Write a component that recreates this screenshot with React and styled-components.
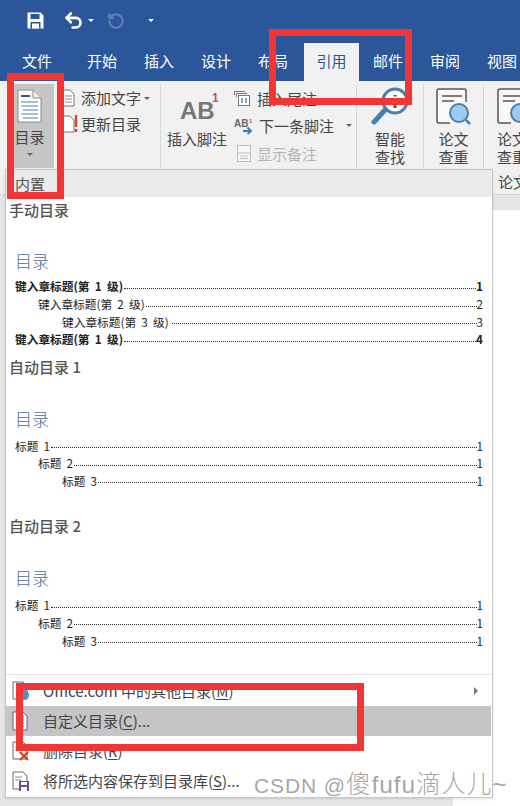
import React from "react";
import styled, { createGlobalStyle } from "styled-components";
import { Undo2, RotateCcw } from "lucide-react";

const FONT = `"Noto Sans CJK SC", "Liberation Sans", sans-serif`;

const Global = createGlobalStyle`
  html, body { margin: 0; padding: 0; background: #fff; }
  body { font-family: ${FONT}; overflow: hidden; }
`;

const Page = styled.div`
  position: relative;
  width: 520px;
  height: 806px;
  overflow: hidden;
  display: flex;
  flex-direction: column;
`;

const TitleBar = styled.div`
  height: 41px;
  background: #2b579a;
  display: flex;
  align-items: center;
  padding-left: 27px;
  color: #fff;
  flex: none;
`;

const Tabs = styled.div`
  height: 40px;
  background: #2b579a;
  display: flex;
  align-items: flex-end;
  flex: none;
  padding-left: 9px;
`;

const Tab = styled.div`
  height: 38px;
  width: ${(p) => p.$w}px;
  margin-left: ${(p) => p.$gap || 0}px;
  display: flex;
  align-items: center;
  justify-content: center;
  padding-bottom: 3px;
  box-sizing: border-box;
  font-size: 15px;
  color: ${(p) => (p.$active ? "#2b579a" : "#fff")};
  background: ${(p) => (p.$active ? "#f1f1f1" : "transparent")};
  flex: none;
`;

const Ribbon = styled.div`
  height: 88px;
  background: #f1f1f1;
  display: flex;
  padding-left: 5px;
  flex: none;
  font-size: 15px;
  color: #444;
  line-height: 18px;
`;

const Group = styled.div`
  width: ${(p) => p.$w}px;
  flex: none;
  box-sizing: border-box;
  border-right: 1px solid #d6d6d6;
  margin-top: 3px;
  margin-bottom: 1px;
  display: flex;
  gap: ${(p) => p.$gap || 0}px;
`;

const TocButton = styled.div`
  width: 41px;
  margin-left: 8px;
  margin-right: 8px;
  padding-right: 8px;
  background: #c5c5c5;
  display: flex;
  flex-direction: column;
  align-items: center;
  flex: none;
  padding-top: 5px;
  box-sizing: border-box;
`;

const Stack = styled.div`
  display: flex;
  flex-direction: column;
  align-items: ${(p) => p.$align || "center"};
  padding-top: ${(p) => p.$top || 0}px;
  padding-left: ${(p) => p.$left || 0}px;
  flex: ${(p) => (p.$grow ? 1 : "none")};
`;

const FootnoteColumn = styled(Stack)`
  width: 62px;
  margin-left: 5px;
`;

const SmallRow = styled.div`
  display: flex;
  align-items: center;
  gap: ${(p) => p.$gap || 3}px;
  height: ${(p) => p.$h || 26}px;
  padding-left: ${(p) => p.$pad || 0}px;
  white-space: nowrap;
  color: ${(p) => (p.$muted ? "#b5b5b5" : "#444")};
`;

const Caret = styled.span`
  display: inline-block;
  width: 0;
  height: 0;
  border-left: 3px solid transparent;
  border-right: 3px solid transparent;
  border-top: 3px solid ${(p) => p.$color || "#666"};
  margin-left: ${(p) => p.$left || 0}px;
  margin-top: ${(p) => p.$top || 0}px;
`;

const Center = styled.div`
  text-align: center;
  white-space: nowrap;
  margin-top: ${(p) => p.$top || 0}px;
`;

const Doc = styled.div`
  flex: 1;
  display: flex;
  flex-direction: column;
`;

const RibbonTail = styled.div`
  height: 26px;
  background: #f1f1f1;
  border-bottom: 1px solid #d6d6d6;
  box-sizing: border-box;
  flex: none;
  padding-left: 498px;
  font-size: 15px;
  line-height: 26px;
  color: #444;
  white-space: nowrap;
  overflow: hidden;
`;

const DocBand = styled.div`
  height: 15px;
  background: #e6e6e6;
  flex: none;
`;

const DocBody = styled.div`
  flex: 1;
  display: flex;
  background: #fff;
`;

const DocGray = styled.div`
  width: 453px;
  background: #e6e6e6;
`;

/* the dropdown lies over the document */
const Menu = styled.div`
  position: absolute;
  left: 5px;
  top: 169px;
  width: 488px;
  height: 629px;
  box-sizing: border-box;
  background: #fff;
  border: 1px solid #c6c6c6;
  box-shadow: 0 1px 3px rgba(0, 0, 0, 0.12);
  display: flex;
  flex-direction: column;
`;

const MenuHead = styled.div`
  height: 27px;
  background: #ebebeb;
  flex: none;
  padding-left: 9px;
  font-size: 15px;
  line-height: 28px;
  color: #555;
`;

const Gallery = styled.div`
  flex: 1;
  display: flex;
  flex-direction: column;
`;

const GalleryLabel = styled.div`
  height: 28px;
  padding-left: 3px;
  margin-top: ${(p) => p.$top || 0}px;
  font-size: 15px;
  font-weight: 500;
  color: #555;
  line-height: 26px;
  flex: none;
`;

const TocTitle = styled.div`
  margin: ${(p) => p.$top}px 0 0 9px;
  height: 24px;
  line-height: 24px;
  font-size: 17px;
  font-weight: 300;
  color: #4d6f97;
  flex: none;
`;

const TocLines = styled.div`
  margin-top: ${(p) => p.$top}px;
  padding: 0 9px 0 9px;
  display: flex;
  flex-direction: column;
  flex: none;
`;

const TocLine = styled.div`
  height: 17.7px;
  display: flex;
  align-items: center;
  padding-left: ${(p) => p.$indent}px;
  font-size: 11.7px;
  font-weight: ${(p) => (p.$bold ? 700 : 400)};
  color: #222;
  white-space: pre;
`;

const Leader = styled.span`
  flex: 1;
  border-bottom: 1px dotted #333;
  margin: 5px 0 0 1px;
`;

const Divider = styled.div`
  height: 1px;
  background: #e3e3e3;
  flex: none;
`;

const MenuItems = styled.div`
  height: 122px;
  flex: none;
  display: flex;
  flex-direction: column;
  padding-top: 1px;
  box-sizing: border-box;
`;

const MenuItem = styled.div`
  height: 30px;
  flex: none;
  display: flex;
  align-items: center;
  box-sizing: border-box;
  padding-bottom: 1px;
  font-size: 15px;
  color: #444;
  padding-left: 6px;
  margin-right: 1px;
  background: ${(p) => (p.$active ? "#c5c5c5" : "transparent")};
  & u { text-underline-offset: 2px; }
`;

const ItemIcon = styled.span`
  width: 18px;
  height: 20px;
  margin-right: 13px;
  flex: none;
  display: flex;
`;

const Arrow = styled.span`
  margin-left: auto;
  margin-right: 13px;
  width: 0;
  height: 0;
  border-top: 4px solid transparent;
  border-bottom: 4px solid transparent;
  border-left: 4px solid #777;
`;

/* red annotation frames drawn over the screenshot */
const Frame = styled.div`
  position: absolute;
  left: ${(p) => p.$x}px;
  top: ${(p) => p.$y}px;
  width: ${(p) => p.$w}px;
  height: ${(p) => p.$h}px;
  box-sizing: border-box;
  border: 7px solid #f23535;
  pointer-events: none;
`;

const Watermark = styled.div`
  position: absolute;
  left: 254px;
  top: 769px;
  font-family: "Liberation Sans", ${FONT};
  font-size: 21px;
  line-height: 32px;
  font-weight: 300;
  color: rgba(120, 120, 120, 0.68);
  white-space: pre;
  letter-spacing: 0.9px;
  & span { font-size: 24.5px; }
`;

const SaveIcon = () => (
  <svg width="17" height="17" viewBox="0 0 17 17">
    <path d="M0.5 0.5H13.5L16.5 3.5V16.5H0.5Z" fill="#fff" />
    <rect x="3.5" y="2" width="9" height="5" fill="#2b579a" />
    <rect x="3.5" y="10" width="10" height="6.5" fill="#2b579a" />
    <rect x="5" y="11.5" width="7" height="5" fill="#fff" />
  </svg>
);

const DocIcon = () => (
  <svg width="25" height="34" viewBox="0 0 25 34">
    <path d="M1 1H16L24 9V33H1Z" fill="#fff" stroke="#8a8a8a" />
    <path d="M16 1V9H24" fill="#eee" stroke="#8a8a8a" />
    <path d="M4 7H13" stroke="#2b579a" strokeWidth="2" />
    <path d="M4 13H21M4 17H21M6 21H21M4 25H21M6 29H21" stroke="#4a7fb5" strokeWidth="1.2" />
  </svg>
);

const PageSmall = ({ bang }) => (
  <svg width="16" height="18" viewBox="0 0 16 18">
    <path d="M1 1H8L12 5V17H1Z" fill="#fff" stroke="#777" />
    {!bang && <path d="M3 7H10M3 10H10M3 13H10" stroke="#888" />}
    {bang && <path d="M14 0V12M14 14V17" stroke="#d24726" strokeWidth="2.4" />}
  </svg>
);

const Footnote = () => (
  <svg width="16" height="15" viewBox="0 0 16 15">
    <path d="M0.5 4V0.5H11" fill="none" stroke="#777" />
    <path d="M2.5 6V2.5H13" fill="none" stroke="#777" />
    <rect x="4.5" y="4.5" width="11" height="10" fill="#fff" stroke="#777" />
    <path d="M8 7V12M12 7V12" stroke="#4a7fb5" strokeWidth="1.4" />
  </svg>
);

const NextNote = () => (
  <svg width="20" height="18" viewBox="0 0 20 18">
    <text x="0" y="10" fontSize="10" fontWeight="700" fontFamily="Liberation Sans" fill="#666">AB</text>
    <text x="15" y="6" fontSize="6" fontWeight="700" fontFamily="Liberation Sans" fill="#c0504d">1</text>
    <path d="M9 14H17M13.5 10.5L17 14L13.5 17" fill="none" stroke="#3f7ab8" strokeWidth="2" />
  </svg>
);

const ShowNote = () => (
  <svg width="14" height="17" viewBox="0 0 14 17">
    <rect x="0.5" y="0.5" width="13" height="16" fill="#f7f7f7" stroke="#bbb" />
    <path d="M0.5 8H13.5M3 11H11M3 13.5H11" stroke="#bbb" />
  </svg>
);

const Lens = () => (
  <svg width="38" height="40" viewBox="0 0 38 40">
    <circle cx="24" cy="15" r="12" fill="#fff" stroke="#4a7fa8" strokeWidth="3" />
    <path d="M14 24L3 36" stroke="#4a7fa8" strokeWidth="5" strokeLinecap="round" />
    <path d="M24 9V10.5M24 13V22" stroke="#555" strokeWidth="3" />
  </svg>
);

const PaperCheck = () => (
  <svg width="36" height="38" viewBox="0 0 36 38">
    <path d="M30 14V3Q30 1 28 1H3Q1 1 1 3V33Q1 35 3 35H14" fill="#f8f8f8" stroke="#555" strokeWidth="1.5" />
    <path d="M6 8H26M6 13H18" stroke="#555" strokeWidth="1.6" />
    <circle cx="23" cy="25" r="9" fill="#9ccbf2" stroke="#4a7fa8" strokeWidth="2" />
    <path d="M30 32L34 36" stroke="#4a7fa8" strokeWidth="2.5" />
  </svg>
);

const GlobeDoc = () => (
  <svg width="18" height="20" viewBox="0 0 18 20">
    <path d="M1 1H11L15 5V18H1Z" fill="#fff" stroke="#666" />
    <circle cx="12" cy="14" r="5" fill="#4a90d0" />
    <path d="M9 11L13 14L10 17" fill="#e0632c" />
  </svg>
);

const ColumnDoc = () => (
  <svg width="18" height="20" viewBox="0 0 18 20">
    <path d="M1 1H11L15 5V19H1Z" fill="#fff" stroke="#666" />
    <path d="M9 6H12M9 9H12M9 12H12M9 15H12" stroke="#666" />
  </svg>
);

const DeleteDoc = () => (
  <svg width="18" height="20" viewBox="0 0 18 20">
    <path d="M1 1H11L15 5V18H1Z" fill="#fff" stroke="#666" />
    <path d="M3 6H10M3 9H10" stroke="#888" />
    <path d="M8 11L16 19M16 11L8 19" stroke="#d24726" strokeWidth="2.4" />
  </svg>
);

const SaveDoc = () => (
  <svg width="18" height="20" viewBox="0 0 18 20">
    <path d="M1 1H11L15 5V18H1Z" fill="#fff" stroke="#666" />
    <path d="M3 6H10M3 9H10" stroke="#888" />
    <rect x="7" y="10" width="10" height="10" fill="#6c4a9e" />
    <rect x="9" y="11" width="6" height="3" fill="#fff" />
    <rect x="9" y="16" width="6" height="4" fill="#fff" />
  </svg>
);

const TABS = [
  ["文件", 56, 0], ["开始", 57, 8.5], ["插入", 57], ["设计", 57], ["布局", 57],
  ["引用", 55, 2.5, true], ["邮件", 57, 0.5], ["审阅", 57], ["视图", 57],
];

const MANUAL = [
  ["键入章标题(第  1  级)", 0, true, "1"],
  ["键入章标题(第  2  级)", 23, false, "2"],
  ["键入章标题(第  3  级) ", 47, false, "3"],
  ["键入章标题(第  1  级)", 0, true, "4"],
];

const AUTO = [
  ["标题  1", 0, false, "1"],
  ["标题  2", 23, false, "1"],
  ["标题  3", 47, false, "1"],
];

function TocPreview({ lines, titleTop, linesTop }) {
  return (
    <>
      <TocTitle $top={titleTop}>目录</TocTitle>
      <TocLines $top={linesTop}>
        {lines.map(([text, indent, bold, num], i) => (
          <TocLine key={i} $indent={indent} $bold={bold}>
            {text}
            <Leader />
            {num}
          </TocLine>
        ))}
      </TocLines>
    </>
  );
}

export default function App() {
  return (
    <Page>
      <Global />
      <TitleBar>
        <SaveIcon />
        <Undo2 size={21} strokeWidth={3} style={{ marginLeft: 19 }} />
        <Caret $left={4} $color="#fff" />
        <RotateCcw size={18} strokeWidth={3} color="#5e80b4" style={{ marginLeft: 13 }} />
        <Caret $left={23} $color="#fff" />
      </TitleBar>
      <Tabs>
        {TABS.map(([label, w, gap, active]) => (
          <Tab key={label} $w={w} $gap={gap} $active={active}>{label}</Tab>
        ))}
      </Tabs>
      <Ribbon>
        <Group $w={156}>
          <TocButton>
            <DocIcon />
            <Center $top={5}>目录</Center>
            <Caret $top={7} />
          </TocButton>
          <Stack $align="flex-start" $top={1}>
            <SmallRow><PageSmall />添加文字<Caret /></SmallRow>
            <SmallRow><PageSmall bang />更新目录</SmallRow>
          </Stack>
        </Group>
        <Group $w={196} $gap={6}>
          <FootnoteColumn $top={5}>
            <svg width="44" height="32" viewBox="0 0 44 32">
              <text x="5" y="30" fontSize="24" fontFamily="Liberation Sans" fontWeight="700" fill="#777">AB</text>
              <text x="37" y="13" fontSize="12" fontWeight="700" fontFamily="Liberation Sans" fill="#c0504d">1</text>
            </svg>
            <Center $top={9}>插入脚注</Center>
          </FootnoteColumn>
          <Stack $align="flex-start" $top={2}>
            <SmallRow $h={25} $gap={7}><Footnote />插入尾注</SmallRow>
            <SmallRow $h={29} $gap={5}><NextNote />下一条脚注<Caret $left={7} /></SmallRow>
            <SmallRow $h={27} $gap={6} $pad={3} $muted><ShowNote />显示备注</SmallRow>
          </Stack>
        </Group>
        <Group $w={67}>
          <Stack $grow $top={2}>
            <Lens />
            <Center $top={4}>智能</Center>
            <Center>查找</Center>
          </Stack>
        </Group>
        <Group $w={60}>
          <Stack $grow $top={4}>
            <PaperCheck />
            <Center $top={4}>论文</Center>
            <Center>查重</Center>
          </Stack>
        </Group>
        <Stack $top={7} $left={13} $align="flex-start">
          <PaperCheck />
          <Center $top={4}>论文</Center>
          <Center>查重</Center>
        </Stack>
      </Ribbon>
      <Doc>
        <RibbonTail>论文</RibbonTail>
        <DocBand />
        <DocBody>
          <DocGray />
        </DocBody>
      </Doc>

      <Menu>
        <MenuHead>内置</MenuHead>
        <Gallery>
          <GalleryLabel>手动目录</GalleryLabel>
          <TocPreview lines={MANUAL} titleTop={24} linesTop={4} />
          <GalleryLabel $top={6}>自动目录 1</GalleryLabel>
          <TocPreview lines={AUTO} titleTop={25} linesTop={5.5} />
          <GalleryLabel $top={24}>自动目录 2</GalleryLabel>
          <TocPreview lines={AUTO} titleTop={25} linesTop={5.5} />
        </Gallery>
        <Divider />
        <MenuItems>
          <MenuItem>
            <ItemIcon><GlobeDoc /></ItemIcon>
            Office.com 中的其他目录(<u>M</u>)
            <Arrow />
          </MenuItem>
          <MenuItem $active>
            <ItemIcon><ColumnDoc /></ItemIcon>
            自定义目录(<u>C</u>)...
          </MenuItem>
          <MenuItem>
            <ItemIcon><DeleteDoc /></ItemIcon>
            删除目录(<u>R</u>)
          </MenuItem>
          <MenuItem>
            <ItemIcon><SaveDoc /></ItemIcon>
            将所选内容保存到目录库(<u>S</u>)...
          </MenuItem>
        </MenuItems>
      </Menu>

      <Frame $x={7} $y={73} $w={57} $h={126} />
      <Frame $x={269} $y={29} $w={143} $h={76} />
      <Frame $x={16} $y={683} $w={348} $h={68} />
      <Watermark>CSDN @<span>傻fufu滴人儿~</span></Watermark>
    </Page>
  );
}
